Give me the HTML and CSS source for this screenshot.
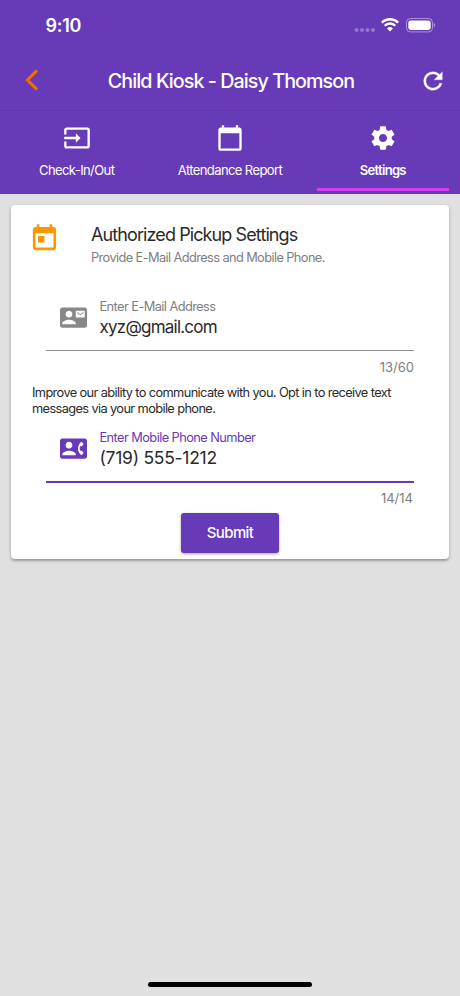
FILE: index.html
```html
<!DOCTYPE html>
<html lang="en">
<head>
<meta charset="utf-8">
<title>Child Kiosk</title>
<link rel="stylesheet" href="styles.css">
</head>
<body>
<div class="screen">
  <header class="header">
    <div class="status">
      <span class="clock">9:10</span>
      <div class="indicators">
        <svg class="cell" width="22" height="6" viewBox="0 0 22 6"><circle cx="2.5" cy="3" r="2"/><circle cx="8" cy="3" r="2"/><circle cx="13.5" cy="3" r="2"/><circle cx="19" cy="3" r="2"/></svg>
        <svg class="wifi" width="18" height="14" viewBox="0 0 18 14"><path d="M.8 4.6a11.7 11.7 0 0 1 16.4 0" /><path d="M3.7 7.7a7.5 7.5 0 0 1 10.6 0"/><path class="dot" d="M9 13.4 6.1 10.4a4.1 4.1 0 0 1 5.8 0z"/></svg>
        <svg class="battery" width="30" height="15" viewBox="0 0 30 15"><rect class="shell" x=".5" y=".5" width="26" height="13.4" rx="4"/><rect class="charge" x="2.3" y="2.4" width="22.4" height="9.6" rx="2.4"/><path class="nub" d="M27.8 5c1.7.4 1.7 4 0 4.400z"/></svg>
      </div>
    </div>
    <div class="toolbar">
      <svg class="back" width="14" height="22" viewBox="0 0 14 22"><path d="M12 1.300 2.500 11l9.500 9.700"/></svg>
      <h1 class="title">Child Kiosk - Daisy Thomson</h1>
      <svg class="refresh" width="28" height="28" viewBox="0 0 24 24"><path d="M17.650 6.350C16.200 4.900 14.210 4 12 4c-4.420 0-7.990 3.580-7.990 8s3.570 8 7.990 8c3.730 0 6.840-2.550 7.730-6h-2.080c-.820 2.330-3.040 4-5.650 4-3.310 0-6-2.690-6-6s2.690-6 6-6c1.660 0 3.140.690 4.220 1.780L13 11h7V4z"/></svg>
    </div>
    <nav class="tabs">
      <div class="tab">
        <svg width="28" height="28" viewBox="0 0 24 24"><path d="M21 3.010H3c-1.100 0-2 .9-2 2V9h2V4.990h18v14.030H3V15H1v4.010c0 1.100.9 1.980 2 1.980h18c1.100 0 2-.88 2-1.980v-14c0-1.110-.9-2-2-2zM11 16l4-4-4-4v3H1v2h10v3z"/></svg>
        <span class="tab-label checkin">Check-In/Out</span>
      </div>
      <div class="tab">
        <svg width="28" height="28" viewBox="0 0 24 24"><path d="M20 3h-1V1h-2v2H7V1H5v2H4c-1.100 0-2 .9-2 2v16c0 1.100.9 2 2 2h16c1.100 0 2-.9 2-2V5c0-1.100-.9-2-2-2zm0 18H4V8h16v13z"/></svg>
        <span class="tab-label report">Attendance Report</span>
      </div>
      <div class="tab active">
        <svg width="28" height="28" viewBox="0 0 24 24"><path d="M19.430 12.980c.04-.32.07-.64.07-.98s-.03-.66-.07-.98l2.110-1.650c.19-.15.24-.42.12-.64l-2-3.460c-.12-.22-.39-.3-.61-.22l-2.490 1c-.52-.4-1.080-.73-1.690-.98l-.38-2.650C14.460 2.180 14.250 2 14 2h-4c-.25 0-.46.18-.49.42l-.38 2.650c-.61.25-1.170.59-1.690.98l-2.490-1c-.23-.09-.49 0-.61.22l-2 3.460c-.13.22-.07.49.12.64l2.110 1.650c-.04.32-.07.65-.07.98s.03.66.07.98l-2.110 1.650c-.19.15-.24.42-.12.64l2 3.460c.12.22.39.3.61.22l2.490-1c.52.4 1.080.73 1.690.98l.38 2.650c.03.24.24.42.49.42h4c.25 0 .46-.18.49-.42l.38-2.650c.61-.25 1.170-.59 1.690-.98l2.490 1c.23.09.49 0 .61-.22l2-3.460c.12-.22.07-.49-.12-.64l-2.110-1.650zM12 15.500c-1.930 0-3.500-1.570-3.500-3.500s1.570-3.500 3.500-3.500 3.500 1.570 3.500 3.500-1.570 3.500-3.500 3.500z"/></svg>
        <span class="tab-label settings">Settings</span>
      </div>
    </nav>
  </header>
  <main class="card">
    <div class="card-head">
      <svg class="today" width="31" height="31" viewBox="0 0 24 24"><path d="M19 3h-1V1h-2v2H8V1H6v2H5c-1.110 0-2 .9-2 2v14c0 1.100.89 2 2 2h14c1.100 0 2-.9 2-2V5c0-1.100-.9-2-2-2zm0 16H5V8h14v11zM7 10h5v5H7z"/></svg>
      <div>
        <h2 class="card-title">Authorized Pickup Settings</h2>
        <p class="card-sub">Provide E-Mail Address and Mobile Phone.</p>
      </div>
    </div>
    <div class="field">
      <svg width="27" height="27" viewBox="0 0 24 24"><path d="M21 8V7l-3 2-3-2v1l3 2 3-2zm1-5H2C.9 3 0 3.900 0 5v14c0 1.100.9 2 2 2h20c1.100 0 2-.9 2-2V5c0-1.100-.9-2-2-2zM8 6c1.660 0 3 1.340 3 3s-1.340 3-3 3-3-1.340-3-3 1.340-3 3-3zm6 12H2v-1c0-2 4-3.100 6-3.100s6 1.100 6 3.100v1zm8-6h-8V6h8v6z"/></svg>
      <div>
        <div class="label email-label">Enter E-Mail Address</div>
        <div class="value email">xyz@gmail.com</div>
      </div>
    </div>
    <div class="count">13/60</div>
    <p class="note"><span class="note-first">Improve our ability to communicate with you. Opt in to receive text</span><br><span class="note-last">messages via your mobile phone.</span></p>
    <div class="field focused">
      <svg width="27" height="27" viewBox="0 0 24 24"><path d="M22 3H2C.9 3 0 3.900 0 5v14c0 1.100.9 2 2 2h20c1.100 0 2-.9 2-2V5c0-1.100-.9-2-2-2zM8 6c1.660 0 3 1.340 3 3s-1.340 3-3 3-3-1.340-3-3 1.340-3 3-3zm6 12H2v-1c0-2 4-3.100 6-3.100s6 1.100 6 3.100v1zm3.850-4h1.640L21 16l-1.990 1.990c-1.310-.98-2.280-2.380-2.730-3.990-.18-.64-.28-1.310-.28-2s.1-1.360.28-2c.45-1.620 1.420-3.010 2.730-3.990L21 8l-1.510 2h-1.640c-.22.63-.35 1.300-.35 2s.13 1.370.35 2z"/></svg>
      <div>
        <div class="label phone-label">Enter Mobile Phone Number</div>
        <div class="value phone">(719) 555-1212</div>
      </div>
    </div>
    <div class="count phone-count">14/14</div>
    <button class="submit">Submit</button>
  </main>
  <div class="home-bar"></div>
</div>
</body>
</html>
```
FILE: styles.css
```css
* { box-sizing: border-box; }
body { margin: 0; font-family: Inter, "Liberation Sans", sans-serif; }
h1, h2, p { margin: 0; font-weight: 400; }
svg { display: block; flex: none; fill: currentColor; }
.screen { width: 460px; height: 996px; display: flex; flex-direction: column; background: #e0e0e0; overflow: hidden; }

.header { height: 194px; flex: none; background: #673ab7; color: #fff; }
.status { height: 50px; display: flex; justify-content: space-between; padding: 15px 24px 0 45.5px; }
.clock { font-size: 18px; line-height: 22px; font-weight: 600; letter-spacing: -.25px; }
.indicators { display: flex; align-items: flex-start; }
.cell { margin: 12px 5px 0 0; opacity: .3; }
.wifi { margin: 3px 7px 0 0; fill: none; stroke: #fff; stroke-width: 2.3; }
.wifi .dot { fill: #fff; stroke: none; }
.battery { margin-top: 3px; }
.shell { fill: none; stroke: #fff; stroke-opacity: .45; }
.nub { opacity: .5; }

.toolbar { height: 61px; display: flex; align-items: center; padding: 0 13px 0 25px; border-bottom: 1px solid #6034b0; }
.back { fill: none; stroke: #ef6c00; stroke-width: 3.2; }
.refresh { stroke: #fff; stroke-width: .2; margin-top: 1px; }
.title { flex: 1; text-align: center; font-size: 19.7px; line-height: 26px; font-weight: 500; letter-spacing: -.93px; white-space: nowrap; margin: 2px -4px 0 0; }

.tabs { height: 83px; display: grid; grid-template-columns: repeat(3, 1fr); }
.tab { display: flex; flex-direction: column; align-items: center; padding-top: 13px; position: relative; }
.tab-label { margin-top: 9px; font-size: 13px; line-height: 18px; white-space: nowrap; letter-spacing: -.6px; }
.settings { font-weight: 600; letter-spacing: -.7px; margin-left: -1px; }
.tab.active::after { content: ""; position: absolute; left: 10px; right: 11px; bottom: 3px; height: 3px; background: #d63ff0; }

.card { width: 438px; height: 354px; flex: none; margin: 11px 0 0 11px; background: #fff; border-radius: 4px; box-shadow: 0 2px 2px rgba(0,0,0,.22), 0 1px 4px rgba(0,0,0,.16); padding: 0 35px; display: flex; flex-direction: column; color: #2a2a2a; }
.card-head { height: 89px; display: flex; gap: 31px; margin-left: -17px; padding-top: 18px; }
.today { color: #fb9800; margin-top: -.5px; }
.card-title { font-size: 18px; line-height: 24px; letter-spacing: -.9px; white-space: nowrap; }
.card-sub { font-size: 12.8px; line-height: 20px; margin-top: 1px; color: #7e7e7e; letter-spacing: -.6px; white-space: nowrap; }
.field { height: 57px; flex: none; display: flex; gap: 13px; padding-left: 13.5px; border-bottom: 1px solid #8e8e8e; white-space: nowrap; }
.field svg { margin-top: 10px; color: #888; }
.label { font-size: 12.8px; line-height: 18px; margin-top: 4px; color: #7e7e7e; letter-spacing: -.57px; }
.value { font-size: 17px; line-height: 22px; }
.email { letter-spacing: -.78px; }
.phone { font-size: 17.5px; letter-spacing: -.27px; }
.focused { border-bottom: 2px solid #6739b7; }
.focused svg, .focused .label { color: #673ab7; }
.count { align-self: flex-end; font-size: 13px; line-height: 18px; margin-top: 7px; color: #7e7e7e; }
.phone-count { margin: 6.500px 1px 0 0; }
.note { margin: 9px 0 0 -14px; font-size: 12.8px; line-height: 15.5px; letter-spacing: -.62px; white-space: nowrap; }
.note + .field { margin-top: 9px; height: 57.5px; }
.submit { align-self: center; flex: none; width: 98px; height: 40px; margin-top: 6px; padding: 0; border: 0; border-radius: 3px; background: #673ab7; color: #fff; font: 500 15px/40px Inter, sans-serif; letter-spacing: -.6px; box-shadow: 0 1px 3px rgba(0,0,0,.35); }
.home-bar { width: 164px; height: 5px; border-radius: 3px; background: #000; margin: auto auto 9.5px 148px; }
```
